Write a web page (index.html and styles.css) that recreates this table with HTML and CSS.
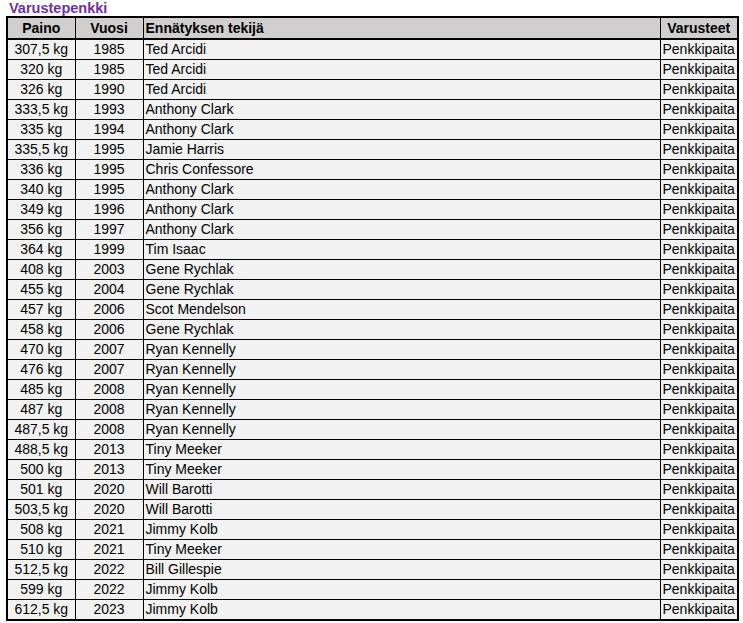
FILE: index.html
```html
<!DOCTYPE html>
<html lang="fi">
<head>
<meta charset="utf-8">
<link rel="stylesheet" href="styles.css">
</head>
<body>
<div class="title">Varustepenkki</div>
<table class="records">
<colgroup><col class="c1"><col class="c2"><col class="c3"><col class="c4"></colgroup>
<thead>
<tr><th class="ctr">Paino</th><th class="ctr">Vuosi</th><th>Ennätyksen tekijä</th><th class="ctr">Varusteet</th></tr>
</thead>
<tbody>
<tr><td class="ctr">307,5 kg</td><td class="ctr">1985</td><td>Ted Arcidi</td><td>Penkkipaita</td></tr>
<tr><td class="ctr">320 kg</td><td class="ctr">1985</td><td>Ted Arcidi</td><td>Penkkipaita</td></tr>
<tr><td class="ctr">326 kg</td><td class="ctr">1990</td><td>Ted Arcidi</td><td>Penkkipaita</td></tr>
<tr><td class="ctr">333,5 kg</td><td class="ctr">1993</td><td>Anthony Clark</td><td>Penkkipaita</td></tr>
<tr><td class="ctr">335 kg</td><td class="ctr">1994</td><td>Anthony Clark</td><td>Penkkipaita</td></tr>
<tr><td class="ctr">335,5 kg</td><td class="ctr">1995</td><td>Jamie Harris</td><td>Penkkipaita</td></tr>
<tr><td class="ctr">336 kg</td><td class="ctr">1995</td><td>Chris Confessore</td><td>Penkkipaita</td></tr>
<tr><td class="ctr">340 kg</td><td class="ctr">1995</td><td>Anthony Clark</td><td>Penkkipaita</td></tr>
<tr><td class="ctr">349 kg</td><td class="ctr">1996</td><td>Anthony Clark</td><td>Penkkipaita</td></tr>
<tr><td class="ctr">356 kg</td><td class="ctr">1997</td><td>Anthony Clark</td><td>Penkkipaita</td></tr>
<tr><td class="ctr">364 kg</td><td class="ctr">1999</td><td>Tim Isaac</td><td>Penkkipaita</td></tr>
<tr><td class="ctr">408 kg</td><td class="ctr">2003</td><td>Gene Rychlak</td><td>Penkkipaita</td></tr>
<tr><td class="ctr">455 kg</td><td class="ctr">2004</td><td>Gene Rychlak</td><td>Penkkipaita</td></tr>
<tr><td class="ctr">457 kg</td><td class="ctr">2006</td><td>Scot Mendelson</td><td>Penkkipaita</td></tr>
<tr><td class="ctr">458 kg</td><td class="ctr">2006</td><td>Gene Rychlak</td><td>Penkkipaita</td></tr>
<tr><td class="ctr">470 kg</td><td class="ctr">2007</td><td>Ryan Kennelly</td><td>Penkkipaita</td></tr>
<tr><td class="ctr">476 kg</td><td class="ctr">2007</td><td>Ryan Kennelly</td><td>Penkkipaita</td></tr>
<tr><td class="ctr">485 kg</td><td class="ctr">2008</td><td>Ryan Kennelly</td><td>Penkkipaita</td></tr>
<tr><td class="ctr">487 kg</td><td class="ctr">2008</td><td>Ryan Kennelly</td><td>Penkkipaita</td></tr>
<tr><td class="ctr">487,5 kg</td><td class="ctr">2008</td><td>Ryan Kennelly</td><td>Penkkipaita</td></tr>
<tr><td class="ctr">488,5 kg</td><td class="ctr">2013</td><td>Tiny Meeker</td><td>Penkkipaita</td></tr>
<tr><td class="ctr">500 kg</td><td class="ctr">2013</td><td>Tiny Meeker</td><td>Penkkipaita</td></tr>
<tr><td class="ctr">501 kg</td><td class="ctr">2020</td><td>Will Barotti</td><td>Penkkipaita</td></tr>
<tr><td class="ctr">503,5 kg</td><td class="ctr">2020</td><td>Will Barotti</td><td>Penkkipaita</td></tr>
<tr><td class="ctr">508 kg</td><td class="ctr">2021</td><td>Jimmy Kolb</td><td>Penkkipaita</td></tr>
<tr><td class="ctr">510 kg</td><td class="ctr">2021</td><td>Tiny Meeker</td><td>Penkkipaita</td></tr>
<tr><td class="ctr">512,5 kg</td><td class="ctr">2022</td><td>Bill Gillespie</td><td>Penkkipaita</td></tr>
<tr><td class="ctr">599 kg</td><td class="ctr">2022</td><td>Jimmy Kolb</td><td>Penkkipaita</td></tr>
<tr><td class="ctr">612,5 kg</td><td class="ctr">2023</td><td>Jimmy Kolb</td><td>Penkkipaita</td></tr>
</tbody>
</table>
</body>
</html>
```
FILE: styles.css
```css
html, body {
  margin: 0;
  padding: 0;
  background: #ffffff;
}
body {
  padding: 0 0 0 6px;
  font-family: "Liberation Sans", Arial, sans-serif;
  font-size: 14px;
  color: #000;
}
.title {
  color: #7030a0;
  font-weight: bold;
  font-size: 14.5px;
  height: 16px;
  line-height: 16px;
  padding-left: 3px;
}
.records {
  border-collapse: collapse;
  table-layout: fixed;
  width: 731px;
  border: 2px solid #000;
}
.c1 { width: 68px; }
.c2 { width: 68px; }
.c3 { width: 517px; }
.c4 { width: 78px; }
.records th {
  background: #d0cece;
  font-weight: bold;
  height: 20px;
  line-height: 20px;
  padding: 0 2px;
  text-align: left;
  border: 1px solid #000;
  border-bottom: 2px solid #000;
}
.records td {
  background: #f2f2f2;
  height: 19px;
  line-height: 19px;
  padding: 0 2px;
  border: 1px solid #000;
  white-space: nowrap;
  overflow: hidden;
}
.records .ctr { text-align: center; }
```
